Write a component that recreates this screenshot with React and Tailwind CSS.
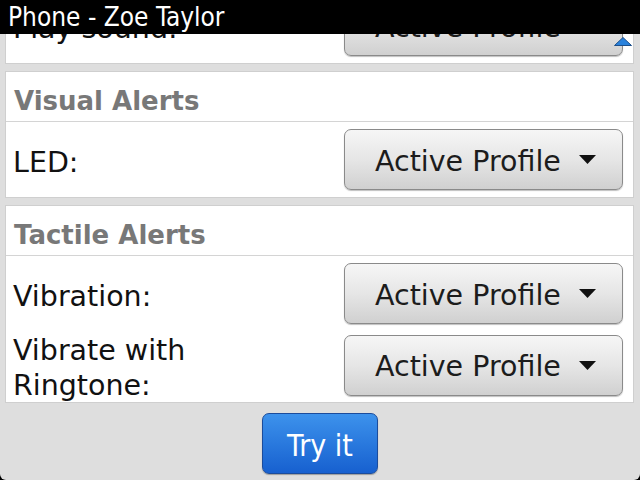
// App.jsx - BlackBerry style notification settings
const Caret = () => (
    <svg width="17" height="9" viewBox="0 0 17 9" className="shrink-0">
        <polygon points="0,0 17,0 8.5,9" fill="#111" />
    </svg>
);

const Dropdown = ({ value = "Active Profile" }) => (
    <div className="ml-auto mr-[10px] w-[279px] h-[61px] shrink-0 flex items-center gap-[18px] pl-[30px] rounded-[7px] border border-[#8a8a8a] bg-gradient-to-b from-[#f6f6f6] via-[#e6e6e6] to-[#d0d0d0] shadow-[0_1px_1px_rgba(0,0,0,0.25)] text-[28.5px] text-[#1c1c1c] leading-none">
        <span className="pt-[5px]">{value}</span>
        <Caret />
    </div>
);

const Row = ({ label, children, className = "" }) => (
    <div className={`flex items-center ${className}`}>
        <div className="pl-[7px] pt-[5px] text-[28.5px] leading-[35px] text-[#111] max-w-[210px]">{label}</div>
        {children}
    </div>
);

const Header = ({ title }) => (
    <div className="h-[50px] pt-[9px] pl-[8px] flex items-center border-b border-[#d4d4d4] text-[26px] font-bold text-[#787878]">
        {title}
    </div>
);

export default function App() {
    return (
        <div className="w-[640px] h-[480px] bg-black flex flex-col overflow-hidden font-['DejaVu_Sans',sans-serif]">
            {/* title bar */}
            <div className="h-[34px] shrink-0 pl-[8px] text-white text-[26px] leading-[34px] font-['DejaVu_Sans_Condensed','DejaVu_Sans',sans-serif] font-stretch-condensed">
                Phone - Zoe Taylor
            </div>

            <div className="relative flex-1 flex flex-col bg-[#dedede] rounded-b-[6px] overflow-hidden">
                {/* scroll up indicator */}
                <svg width="18" height="9" viewBox="0 0 18 9" className="absolute left-[614px] top-[3px] z-10">
                    <polygon points="9,0.5 17.5,8.5 0.5,8.5" fill="#2a82dc" stroke="#1d4f8a" strokeWidth="1" />
                </svg>

                {/* partially scrolled card */}
                <div className="mt-[-47px] ml-[5px] mr-[6px] bg-white border border-[#cfcfcf]">
                    <Row label="Play sound:" className="py-[7px]">
                        <Dropdown />
                    </Row>
                </div>

                <div className="mt-[7px] ml-[5px] mr-[6px] bg-white border border-[#cfcfcf]">
                    <Header title="Visual Alerts" />
                    <Row label="LED:" className="py-[7px]">
                        <Dropdown />
                    </Row>
                </div>

                <div className="mt-[7px] ml-[5px] mr-[6px] bg-white border border-[#cfcfcf]">
                    <Header title="Tactile Alerts" />
                    <div className="flex flex-col gap-[6px] pt-[7px] pb-[2px]">
                        <Row label="Vibration:">
                            <Dropdown />
                        </Row>
                        <Row label="Vibrate with Ringtone:" className="h-[70px]">
                            <Dropdown />
                        </Row>
                    </div>
                </div>

                <div className="flex justify-center pt-[10px]">
                    <button className="w-[116px] h-[61px] pt-[4px] rounded-[7px] border border-[#1b4c9c] bg-gradient-to-b from-[#3d92ec] to-[#1760cf] text-white text-[30px] leading-none font-['DejaVu_Sans_Condensed','DejaVu_Sans',sans-serif] font-stretch-condensed shadow-[0_1px_1px_rgba(0,0,0,0.3)]">
                        Try it
                    </button>
                </div>
            </div>
        </div>
    );
}
